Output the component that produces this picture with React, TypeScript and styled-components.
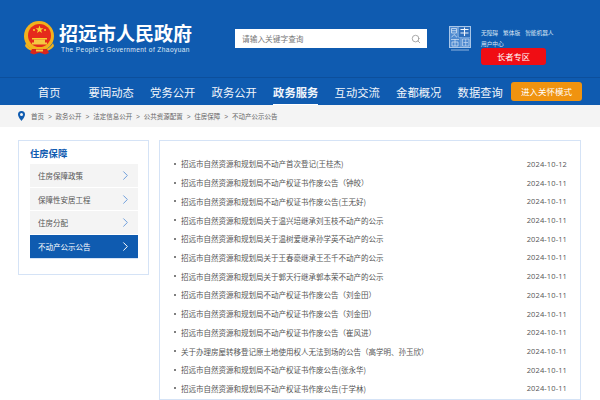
import styled, { createGlobalStyle } from 'styled-components'
import { ChevronRight, Search } from 'lucide-react'

const BLUE = '#0f5bb0'

const GlobalStyle = createGlobalStyle`
  html, body {
    margin: 0;
    padding: 0;
    background: #fff;
    overflow: hidden;
  }
  body {
    font-family: "Noto Sans CJK SC", "Liberation Sans", sans-serif;
  }
  ul {
    margin: 0;
    padding: 0;
    list-style: none;
  }
`

const Page = styled.div`
  width: 600px;
  height: 400px;
  overflow: hidden;
`

const Masthead = styled.header`
  display: flex;
  align-items: flex-start;
  height: 77px;
  background: ${BLUE};
  border-bottom: 1px solid #0c4f9c;
`

const Brand = styled.div`
  display: flex;
  width: 235px;
  padding: 21px 0 0 23px;
  box-sizing: border-box;
  gap: 4px;
`

const BrandText = styled.div`
  display: flex;
  flex-direction: column;
  color: #fff;
`

const BrandName = styled.div`
  font-size: 19px;
  line-height: 24px;
  font-weight: 700;
  white-space: nowrap;
`

const BrandEnglish = styled.div`
  font-family: "Liberation Sans", sans-serif;
  font-size: 6.6px;
  line-height: 9px;
  letter-spacing: 0.4px;
  white-space: nowrap;
  padding-left: 2px;
  color: #dfe9f6;
`

const SearchBox = styled.div`
  display: flex;
  align-items: center;
  justify-content: space-between;
  box-sizing: border-box;
  width: 192px;
  height: 19px;
  margin-top: 29px;
  padding: 0 6px 0 7px;
  background: #fff;
  color: #777;
  font-size: 7.7px;
`

const Seal = styled.div`
  margin: 26px 0 0 22px;
  width: 22px;
  height: 26px;
`

const Tools = styled.div`
  margin: 26.5px 0 0 10px;
  width: 78px;
`

const ToolLinks = styled.div`
  display: flex;
  flex-wrap: wrap;
  gap: 0 5px;
  color: #dbe7f5;
  font-size: 5.7px;
  line-height: 11px;
`

const ElderButton = styled.div`
  width: 65px;
  height: 17px;
  margin-top: -1px;
  border-radius: 3px;
  background: #f00d14;
  color: #fff;
  font-size: 8.3px;
  line-height: 17px;
  text-align: center;
`

const NavBar = styled.nav`
  display: flex;
  align-items: flex-start;
  gap: 16.3px;
  height: 27px;
  padding-left: 38px;
  background: ${BLUE};
`

const NavItem = styled.div<{ $active?: boolean; $home?: boolean }>`
  position: relative;
  height: 27px;
  margin-right: ${(props) => (props.$home ? 11.7 : 0)}px;
  line-height: 28px;
  color: #f2f6fb;
  font-size: 11.3px;
  font-weight: ${(props) => (props.$active ? 700 : 400)};
  white-space: nowrap;
  ${(props) =>
    props.$active &&
    `&::after {
      content: '';
      position: absolute;
      left: 0;
      right: 0;
      bottom: 0;
      height: 1px;
      background: #fff;
    }`}
`

const CareButton = styled.div`
  margin: 4px 0 0 -8px;
  width: 71px;
  height: 19px;
  border-radius: 3px;
  background: #f0930f;
  color: #fff;
  font-size: 8.5px;
  line-height: 19px;
  text-align: center;
`

const Crumbs = styled.div`
  display: flex;
  align-items: center;
  height: 22px;
  padding-left: 18px;
  background: #f4f4f4;
  color: #666;
  font-size: 6.5px;
  white-space: nowrap;
`

const CrumbPin = styled.svg`
  width: 7px;
  height: 10px;
  margin-right: 6px;
`

const CrumbSep = styled.span`
  margin: 0 3.9px;
  font-family: "Liberation Sans", sans-serif;
  font-size: 6.5px;
`

const Main = styled.main`
  display: flex;
  align-items: flex-start;
  gap: 10px;
  padding: 13px 0 0 18px;
`

const SidePanel = styled.aside`
  box-sizing: border-box;
  width: 131px;
  height: 135px;
  padding: 5px 10px 0 11px;
  border: 1px solid #d5e3f6;
`

const SideTitle = styled.h2`
  margin: 0 0 4px;
  color: ${BLUE};
  font-size: 9.3px;
  line-height: 14px;
  font-weight: 700;
`

const SideItem = styled.div<{ $active?: boolean }>`
  display: flex;
  align-items: center;
  justify-content: space-between;
  box-sizing: border-box;
  height: 23.7px;
  padding: 0 5px 0 8px;
  background: ${(props) => (props.$active ? BLUE : '#f4f4f4')};
  color: ${(props) => (props.$active ? '#fff' : '#555')};
  font-size: 7.5px;
  border-bottom: 1px solid ${(props) => (props.$active ? '#d5e3f6' : '#fff')};
`

const SideArrow = styled(ChevronRight)<{ $active?: boolean }>`
  width: 15px;
  height: 15px;
  stroke-width: 1.6px;
  color: ${(props) => (props.$active ? '#fff' : '#6f9fdc')};
`

const ListPanel = styled.section`
  box-sizing: border-box;
  width: 422px;
  height: 260px;
  padding: 13.5px 13px 0 14px;
  border: 1px solid #d5e3f6;
`

const ArticleRow = styled.li`
  display: flex;
  align-items: center;
  justify-content: space-between;
  height: 18.72px;
  color: #555;
  font-size: 7.5px;
  white-space: nowrap;
`

const ArticleTitle = styled.span`
  display: flex;
  align-items: center;
  gap: 5px;
  &::before {
    content: '';
    width: 2px;
    height: 2px;
    border-radius: 50%;
    background: #555;
  }
`

const ArticleDate = styled.span`
  font-family: "Open Sans", "Liberation Sans", sans-serif;
  font-size: 7.5px;
  letter-spacing: 0.12px;
`

const navItems = [
  { label: '首页', home: true },
  { label: '要闻动态' },
  { label: '党务公开' },
  { label: '政务公开' },
  { label: '政务服务', active: true },
  { label: '互动交流' },
  { label: '金都概况' },
  { label: '数据查询' },
]

const crumbs = ['首页', '政务公开', '法定信息公开', '公共资源配置', '住房保障', '不动产公示公告']

const sideItems = ['住房保障政策', '保障性安居工程', '住房分配', '不动产公示公告']

const articles = [
  { title: '招远市自然资源和规划局不动产首次登记(王桂杰)', date: '2024-10-12' },
  { title: '招远市自然资源和规划局不动产权证书作废公告（钟皎）', date: '2024-10-11' },
  { title: '招远市自然资源和规划局不动产权证书作废公告(王无好)', date: '2024-10-11' },
  { title: '招远市自然资源和规划局关于温兴培继承刘玉枝不动产的公示', date: '2024-10-11' },
  { title: '招远市自然资源和规划局关于温树爱继承孙学英不动产的公示', date: '2024-10-11' },
  { title: '招远市自然资源和规划局关于王春豪继承王丕千不动产的公示', date: '2024-10-11' },
  { title: '招远市自然资源和规划局关于郭天行继承郭本荣不动产的公示', date: '2024-10-11' },
  { title: '招远市自然资源和规划局不动产权证书作废公告（刘金田）', date: '2024-10-11' },
  { title: '招远市自然资源和规划局不动产权证书作废公告（刘金田）', date: '2024-10-11' },
  { title: '招远市自然资源和规划局不动产权证书作废公告（崔风进）', date: '2024-10-11' },
  { title: '关于办理房屋转移登记原土地使用权人无法到场的公告（高学明、孙玉欣）', date: '2024-10-11' },
  { title: '招远市自然资源和规划局不动产权证书作废公告(张永华)', date: '2024-10-11' },
  { title: '招远市自然资源和规划局不动产权证书作废公告(于学林)', date: '2024-10-11' },
]

function Emblem() {
  return (
    <svg width="32" height="34" viewBox="0 0 32 34">
      <circle cx="16" cy="15" r="15" fill="#f2b21c" />
      <circle cx="16.500" cy="14.500" r="11.500" fill="#e52a1c" />
      <path d="M16.500 4.500l1 2.800h3l-2.400 1.800.9 2.900-2.500-1.800-2.500 1.800.9-2.900-2.400-1.800h3z" fill="#f8d12e" />
      <circle cx="11" cy="9" r="1" fill="#f8d12e" />
      <circle cx="22" cy="9" r="1" fill="#f8d12e" />
      <rect x="9" y="17" width="15" height="1.500" fill="#f8d12e" />
      <path d="M11 18.500h11v3h2v2H9v-2h2z" fill="#f5c842" />
      <path d="M3 22c3 5 7 7 13.500 7S27 27 30 22l1 3c-3 4-8 6-14.500 6S5 29 2 25z" fill="#f2b21c" />
      <path d="M9 28h15l2 4-4 1.500-5.500-2-5.500 2-4-1.500z" fill="#d9261c" />
      <rect x="13" y="28.500" width="7" height="2" fill="#f5c842" />
    </svg>
  )
}

function SealMark() {
  return (
    <svg width="22" height="26" viewBox="0 0 22 26">
      <rect x="0.500" y="0.500" width="21" height="21" fill="#4f8ad0" stroke="#a9c6e8" />
      <path d="M9 1v10M9 11h12M12 11v10" stroke="#a9c6e8" strokeWidth="0.6" />
      <rect x="10" y="1" width="11" height="10" fill="#2f6fbc" />
      <path d="M11.500 3.500h8M11.500 7h8M15.500 1.500v8.500" stroke="#f2f6fb" strokeWidth="1.100" fill="none" />
      <path d="M2.500 2.500h5v4.500h-5zM2.500 4.700h5M5 8.500l-2.500 2.800M5 8.500l3 2.800" stroke="#e3edf8" strokeWidth="0.7" fill="none" />
      <path d="M2 13.500h8M3 16h6M3 16v4h6v-4M6 13v7" stroke="#dbe7f5" strokeWidth="0.7" fill="none" />
      <path d="M13.500 13h6.500v7h-6.500zM14.500 16.500h4.500M16.700 13v7" stroke="#c4d9f0" strokeWidth="0.7" fill="none" />
      <rect x="2" y="23.500" width="18" height="1" fill="#8fb4de" />
    </svg>
  )
}

export default function App() {
  return (
    <Page>
      <GlobalStyle />
      <Masthead>
        <Brand>
          <Emblem />
          <BrandText>
            <BrandName>招远市人民政府</BrandName>
            <BrandEnglish>The People's Government of Zhaoyuan</BrandEnglish>
          </BrandText>
        </Brand>
        <SearchBox>
          请输入关键字查询
          <Search size={10} color="#999" />
        </SearchBox>
        <Seal>
          <SealMark />
        </Seal>
        <Tools>
          <ToolLinks>
            <span>无障碍</span>
            <span>繁体版</span>
            <span>智能机器人</span>
            <span>用户中心</span>
          </ToolLinks>
          <ElderButton>长者专区</ElderButton>
        </Tools>
      </Masthead>
      <NavBar>
        {navItems.map((item) => (
          <NavItem key={item.label} $home={item.home} $active={item.active}>
            {item.label}
          </NavItem>
        ))}
        <CareButton>进入关怀模式</CareButton>
      </NavBar>
      <Crumbs>
        <CrumbPin viewBox="0 0 14 20">
          <path
            d="M7 0a7 7 0 0 1 7 7c0 5-7 13-7 13S0 12 0 7a7 7 0 0 1 7-7zm0 4a3 3 0 1 0 0 6 3 3 0 0 0 0-6z"
            fill={BLUE}
            fillRule="evenodd"
          />
        </CrumbPin>
        {crumbs.map((crumb, index) => (
          <span key={crumb}>
            {index > 0 && <CrumbSep>&gt;</CrumbSep>}
            {crumb}
          </span>
        ))}
      </Crumbs>
      <Main>
        <SidePanel>
          <SideTitle>住房保障</SideTitle>
          {sideItems.map((item, index) => {
            const active = index === sideItems.length - 1
            return (
              <SideItem key={item} $active={active}>
                {item}
                <SideArrow $active={active} />
              </SideItem>
            )
          })}
        </SidePanel>
        <ListPanel>
          <ul>
            {articles.map((article, index) => (
              <ArticleRow key={index}>
                <ArticleTitle>{article.title}</ArticleTitle>
                <ArticleDate>{article.date}</ArticleDate>
              </ArticleRow>
            ))}
          </ul>
        </ListPanel>
      </Main>
    </Page>
  )
}
